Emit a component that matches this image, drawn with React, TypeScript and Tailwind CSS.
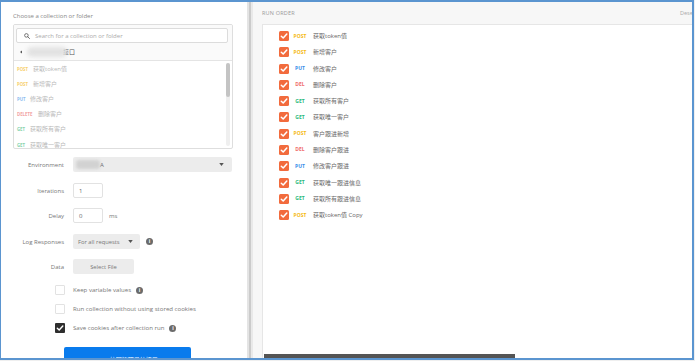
import React from "react";

const font = { fontFamily: '"Open Sans", "Noto Sans CJK SC", sans-serif' };

function Check({ dark }: { dark?: boolean }) {
  return (
    <svg viewBox="0 0 10 10" className="w-full h-full">
      <polyline points="2.3,5.2 4.2,7 7.8,3" fill="none" stroke="#fff" strokeWidth={dark ? 1.4 : 1.5} strokeLinecap="round" strokeLinejoin="round" />
    </svg>
  );
}

function Info() {
  return (
    <span className="w-[7px] h-[7px] rounded-full bg-[#6b6b6b] text-white text-[5px] leading-[7px] font-bold flex items-center justify-center shrink-0">i</span>
  );
}

function Caret() {
  return (
    <svg viewBox="0 0 6 4" className="w-[5px] h-[3px]">
      <polygon points="0,0 6,0 3,4" fill="#555" />
    </svg>
  );
}

const leftItems: { m: string; c: string; n: string; w: string }[] = [
  { m: "POST", c: "text-[#f7cf6d]", n: "获取token值", w: "w-[16px]" },
  { m: "POST", c: "text-[#f7cf6d]", n: "新增客户", w: "w-[16px]" },
  { m: "PUT", c: "text-[#8dbdf0]", n: "修改客户", w: "w-[13px]" },
  { m: "DELETE", c: "text-[#f2a3a3]", n: "删除客户", w: "w-[21px]" },
  { m: "GET", c: "text-[#86d3ac]", n: "获取所有客户", w: "w-[13px]" },
  { m: "GET", c: "text-[#86d3ac]", n: "获取唯一客户", w: "w-[13px]" },
];

const runItems: { m: string; c: string; n: string }[] = [
  { m: "POST", c: "text-[#f5b914]", n: "获取token值" },
  { m: "POST", c: "text-[#f5b914]", n: "新增客户" },
  { m: "PUT", c: "text-[#3b8ee8]", n: "修改客户" },
  { m: "DEL", c: "text-[#f06c6c]", n: "删除客户" },
  { m: "GET", c: "text-[#2cb77a]", n: "获取所有客户" },
  { m: "GET", c: "text-[#2cb77a]", n: "获取唯一客户" },
  { m: "POST", c: "text-[#f5b914]", n: "客户跟进新增" },
  { m: "DEL", c: "text-[#f06c6c]", n: "删除客户跟进" },
  { m: "PUT", c: "text-[#3b8ee8]", n: "修改客户跟进" },
  { m: "GET", c: "text-[#2cb77a]", n: "获取唯一跟进信息" },
  { m: "GET", c: "text-[#2cb77a]", n: "获取所有跟进信息" },
  { m: "POST", c: "text-[#f5b914]", n: "获取token值 Copy" },
];

function FormRow({ label, children, mt }: { label: string; children: React.ReactNode; mt: string }) {
  return (
    <div className={`flex items-center h-[15px] shrink-0 ${mt}`}>
      <div className="w-[63px] text-right text-[6px] text-[#777] leading-[8px]">{label}</div>
      <div className="ml-[9px] flex items-center h-full">{children}</div>
    </div>
  );
}

function CheckRow({ label, checked, info, mt }: { label: string; checked?: boolean; info?: boolean; mt: string }) {
  return (
    <div className={`flex items-center h-[10px] shrink-0 ${mt}`}>
      <div className="ml-[54px] w-[10px] h-[10px] shrink-0">
        {checked ? (
          <div className="w-full h-full bg-[#2e2e2e] rounded-[1px]"><Check dark /></div>
        ) : (
          <div className="w-full h-full bg-white border border-[#e2e2e2] rounded-[1px]" />
        )}
      </div>
      <span className="ml-[8px] text-[6.1px] text-[#777] leading-[8px] whitespace-nowrap">{label}</span>
      {info && <span className="ml-[5px]"><Info /></span>}
    </div>
  );
}

export default function App() {
  return (
    <div className="w-[695px] h-[361px] bg-[#efefef] overflow-hidden" style={font}>
      <div className="w-[694px] h-[360px] border-l border-t-2 border-r-2 border-b-2 border-[#5b95d0] bg-white flex overflow-hidden">
        {/* Left panel */}
        <div className="w-[246px] shrink-0 h-full flex flex-col bg-white overflow-hidden">
          <div className="mt-[10px] ml-[12px] h-[8px] shrink-0 text-[6px] leading-[8px] text-[#888]">Choose a collection or folder</div>
          <div className="mt-[4px] ml-[12px] w-[220px] h-[125px] shrink-0 border border-[#dedede] rounded-[2px] flex flex-col overflow-hidden">
            <div className="bg-[#fafafa] pt-[3px] border-b border-[#e4e4e4] shrink-0">
              <div className="ml-[2px] w-[212px] h-[15px] bg-white border border-[#dcdcdc] rounded-[2px] flex items-center">
                <svg viewBox="0 0 10 10" className="ml-[7px] w-[6px] h-[6px]">
                  <circle cx="4" cy="4" r="3" fill="none" stroke="#555" strokeWidth="1.3" />
                  <line x1="6.2" y1="6.2" x2="9.2" y2="9.2" stroke="#555" strokeWidth="1.4" strokeLinecap="round" />
                </svg>
                <span className="ml-[5px] text-[6px] leading-[8px] text-[#aaa]">Search for a collection or folder</span>
              </div>
              <div className="h-[17px] flex items-center">
                <svg viewBox="0 0 4 6" className="ml-[6px] w-[2px] h-[4px]">
                  <polygon points="4,0 4,6 0,3" fill="#555" />
                </svg>
                <span className="relative z-10 ml-[5px] w-[40px] h-[10px] rounded-full bg-[#e2e2e2] blur-[2px]" />
                <span className="-ml-[4px] text-[6px] leading-[8px] text-[#555]">接口</span>
              </div>
            </div>
            <div className="flex flex-1 overflow-hidden">
              <div className="flex-1 flex flex-col">
                {leftItems.map((it, i) => (
                  <div key={i} className="h-[15.2px] shrink-0 flex items-center pl-[3px]">
                    <span className={`${it.w} text-[4.3px] font-bold leading-[6px] ${it.c}`}>{it.m}</span>
                    <span className="text-[6px] leading-[8px] text-[#b8b8b8]">{it.n}</span>
                  </div>
                ))}
              </div>
              <div className="w-[4px] mr-[2px] mt-[2px] mb-[2px] bg-[#efefef] rounded-[2px] flex flex-col">
                <div className="h-[34px] bg-[#c4c4c4] rounded-[2px]" />
              </div>
            </div>
          </div>

          <FormRow label="Environment" mt="mt-[8px]">
            <div className="w-[159px] h-[15px] bg-[#ececec] rounded-[2px] flex items-center">
              <span className="ml-[3px] w-[24px] h-[9px] rounded-[3px] bg-[#d2d2d2] blur-[1.5px]" />
              <span className="text-[6px] text-[#666] leading-[8px]">A</span>
              <span className="ml-auto mr-[8px] flex"><Caret /></span>
            </div>
          </FormRow>
          <FormRow label="Iterations" mt="mt-[11px]">
            <div className="w-[30px] h-[15px] border border-[#e2e2e2] rounded-[2px] flex items-center">
              <span className="ml-[5px] text-[6px] leading-[8px] text-[#666]">1</span>
            </div>
          </FormRow>
          <FormRow label="Delay" mt="mt-[10px]">
            <div className="w-[30px] h-[15px] border border-[#e2e2e2] rounded-[2px] flex items-center">
              <span className="ml-[5px] text-[6px] leading-[8px] text-[#666]">0</span>
            </div>
            <span className="ml-[6px] text-[6px] leading-[8px] text-[#777]">ms</span>
          </FormRow>
          <FormRow label="Log Responses" mt="mt-[11px]">
            <div className="w-[67px] h-[15px] bg-[#ececec] rounded-[2px] flex items-center">
              <span className="ml-[5px] text-[5.8px] leading-[8px] text-[#777] whitespace-nowrap">For all requests</span>
              <span className="ml-auto mr-[7px] flex"><Caret /></span>
            </div>
            <span className="ml-[6px]"><Info /></span>
          </FormRow>
          <FormRow label="Data" mt="mt-[10px]">
            <div className="w-[61px] h-[15px] bg-[#ececec] rounded-[2px] flex items-center justify-center">
              <span className="text-[5.8px] leading-[8px] text-[#777]">Select File</span>
            </div>
          </FormRow>

          <CheckRow label="Keep variable values" info mt="mt-[11px]" />
          <CheckRow label="Run collection without using stored cookies" mt="mt-[9px]" />
          <CheckRow label="Save cookies after collection run" checked info mt="mt-[9px]" />

          <div className="mt-[14px] ml-[63px] w-[127px] h-[22px] shrink-0 bg-[#097bed] rounded-[2px] flex justify-center pt-[9px]">
            <span className="text-[6px] leading-[8px] text-white">Run 校园管理系统接口</span>
          </div>
        </div>

        {/* Divider */}
        <div className="w-[2px] h-full bg-[#e4e4e4] shrink-0" />
        <div className="w-[2px] h-full bg-[#cbcbcb] shrink-0" />
        <div className="w-[2px] h-full bg-[#e9e9e9] shrink-0" />

        {/* Right panel */}
        <div className="flex-1 h-full bg-[#f7f7f7] flex flex-col overflow-hidden">
          <div className="h-[22px] shrink-0 flex items-center pl-[9px] whitespace-nowrap overflow-hidden">
            <span className="w-[418px] shrink-0 text-[5.5px] leading-[8px] text-[#999] tracking-[0.2px]">RUN ORDER</span>
            <span className="shrink-0 text-[5.5px] leading-[8px] text-[#aaa]">Deselect All</span>
          </div>
          <div className="flex-1 ml-[9px] bg-white border-l border-t border-[#e6e6e6] flex flex-col">
            <div className="pt-[3px] flex flex-col">
              {runItems.map((it, i) => (
                <div key={i} className="h-[16.27px] shrink-0 flex items-center pl-[16px]">
                  <div className="w-[10px] h-[10px] bg-[#f26b3d] rounded-[1.5px] shrink-0"><Check /></div>
                  <span className={`w-[18px] ml-[2px] text-center text-[5px] font-bold leading-[7px] ${it.c}`}>{it.m}</span>
                  <span className="ml-[4px] text-[6px] leading-[8px] text-[#666] whitespace-nowrap">{it.n}</span>
                </div>
              ))}
            </div>
            <div className="flex-1" />
            <div className="ml-[1px] w-[251px] h-[4px] bg-[#545454] shrink-0" />
          </div>
        </div>
      </div>
    </div>
  );
}
